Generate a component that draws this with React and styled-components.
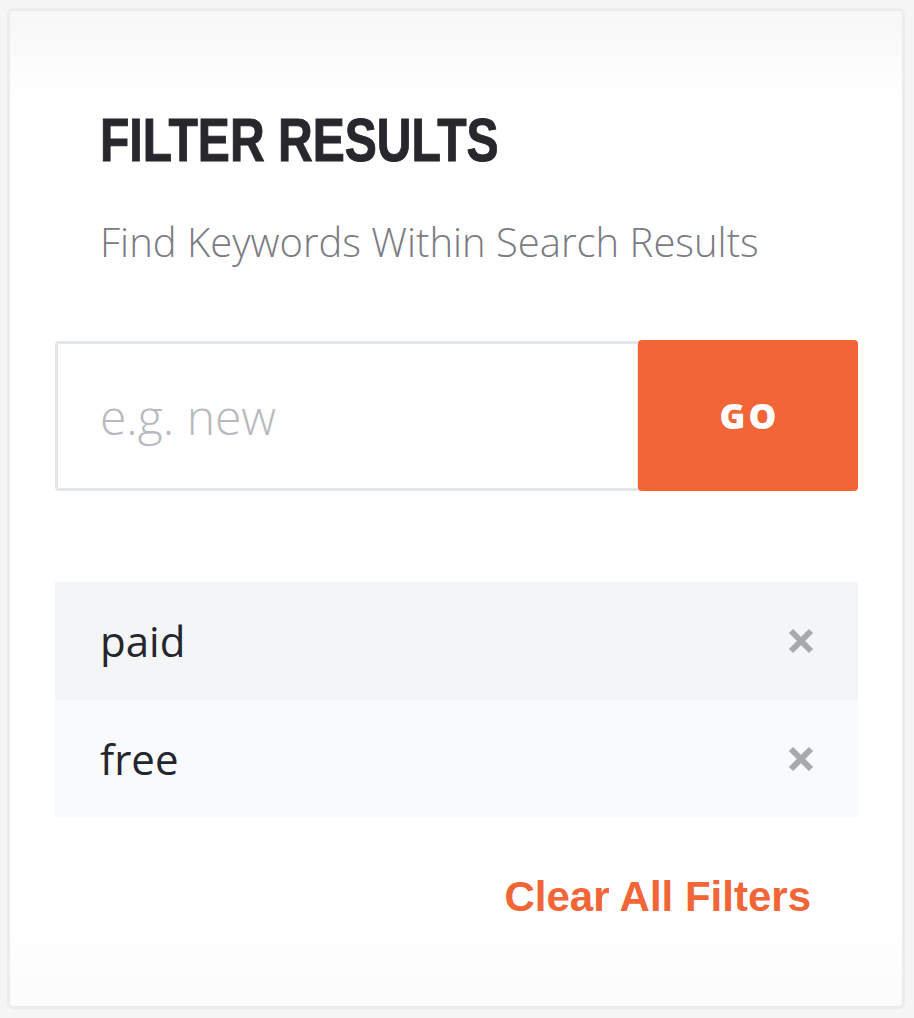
import React from "react";
import styled, { createGlobalStyle } from "styled-components";

const GlobalStyle = createGlobalStyle`
  html, body {
    margin: 0;
    padding: 0;
    background: #f5f5f5;
  }
  * {
    box-sizing: border-box;
  }
`;

const filters = ["paid", "free"];

const App = () => {
  return (
    <Page>
      <GlobalStyle />
      <Card>
        <Header>
          <Title>FILTER RESULTS</Title>
          <Subtitle>Find Keywords Within Search Results</Subtitle>
        </Header>
        <SearchForm onSubmit={(e) => e.preventDefault()}>
          <Input type="text" placeholder="e.g. new" />
          <GoButton type="submit">GO</GoButton>
        </SearchForm>
        <FilterList>
          {filters.map((f, i) => (
            <FilterRow key={f} $alt={i % 2 === 1}>
              <FilterLabel>{f}</FilterLabel>
              <RemoveButton aria-label={"remove " + f}>
                <svg width="26" height="26" viewBox="0 0 26 26">
                  <path
                    d="M3 3 L23 23 M23 3 L3 23"
                    stroke="#a9a9ac"
                    strokeWidth="6"
                    fill="none"
                  />
                </svg>
              </RemoveButton>
            </FilterRow>
          ))}
        </FilterList>
        <Footer>
          <ClearLink href="#">Clear All Filters</ClearLink>
        </Footer>
      </Card>
    </Page>
  );
};

const Page = styled.div`
  padding: 8px 9px 9px 7px;
`;

const Card = styled.div`
  width: 898px;
  height: 1001px;
  display: flex;
  flex-direction: column;
  padding: 98px 44px 0 45px;
  border: 3px solid #ececec;
  border-radius: 6px;
  background: linear-gradient(
    #f7f7f7 0,
    #ffffff 90px,
    #ffffff calc(100% - 80px),
    #fbfbfb 100%
  );
`;

const Header = styled.div`
  padding-left: 45px;
  display: flex;
  flex-direction: column;
`;

const Title = styled.h1`
  margin: 0;
  font-family: "Liberation Sans", Arial, sans-serif;
  font-weight: 700;
  font-size: 62px;
  line-height: 62px;
  color: #27272d;
  white-space: nowrap;
  -webkit-text-stroke: 1px #27272d;
  transform: scaleX(0.775);
  transform-origin: left center;
`;

const Subtitle = styled.p`
  margin: 51px 0 78px;
  font-family: "Open Sans", sans-serif;
  font-weight: 300;
  font-size: 40px;
  line-height: 40px;
  color: #7b7b83;
  white-space: nowrap;
`;

const SearchForm = styled.form`
  display: flex;
  align-items: flex-end;
  height: 151px;
`;

const Input = styled.input`
  flex: 1;
  min-width: 0;
  height: 150px;
  margin-right: -2px;
  padding: 0 20px 0 42px;
  border: 3px solid #e3e6ea;
  border-radius: 4px 0 0 4px;
  outline: none;
  font-family: "Open Sans", sans-serif;
  font-weight: 300;
  font-size: 48px;
  color: #333;
  background: #fff;
  &::placeholder {
    color: #b7b9be;
  }
`;

const GoButton = styled.button`
  position: relative;
  flex-shrink: 0;
  width: 220px;
  height: 151px;
  border: none;
  border-radius: 4px;
  background: #f26536;
  color: #fff;
  font-family: "Open Sans", sans-serif;
  font-weight: 800;
  font-size: 35px;
  letter-spacing: 3px;
  padding: 0 0 0 3px;
  cursor: pointer;
`;

const FilterList = styled.div`
  margin-top: 91px;
  display: flex;
  flex-direction: column;
`;

const FilterRow = styled.div`
  height: ${(p) => (p.$alt ? "117px" : "118px")};
  display: flex;
  align-items: center;
  justify-content: space-between;
  padding: 0 44px 0 45px;
  background: ${(p) => (p.$alt ? "#f9fafc" : "#f4f5f7")};
`;

const FilterLabel = styled.span`
  font-family: "Open Sans", sans-serif;
  font-size: 42px;
  line-height: 42px;
  color: #25252d;
`;

const RemoveButton = styled.button`
  display: flex;
  padding: 0;
  border: none;
  background: none;
  cursor: pointer;
`;

const Footer = styled.div`
  display: flex;
  justify-content: flex-end;
  padding-right: 47px;
  margin-top: 59px;
`;

const ClearLink = styled.a`
  font-family: "Liberation Sans", Arial, sans-serif;
  font-weight: 700;
  font-size: 42px;
  line-height: 41px;
  color: #f26536;
  text-decoration: none;
`;

export default App;
